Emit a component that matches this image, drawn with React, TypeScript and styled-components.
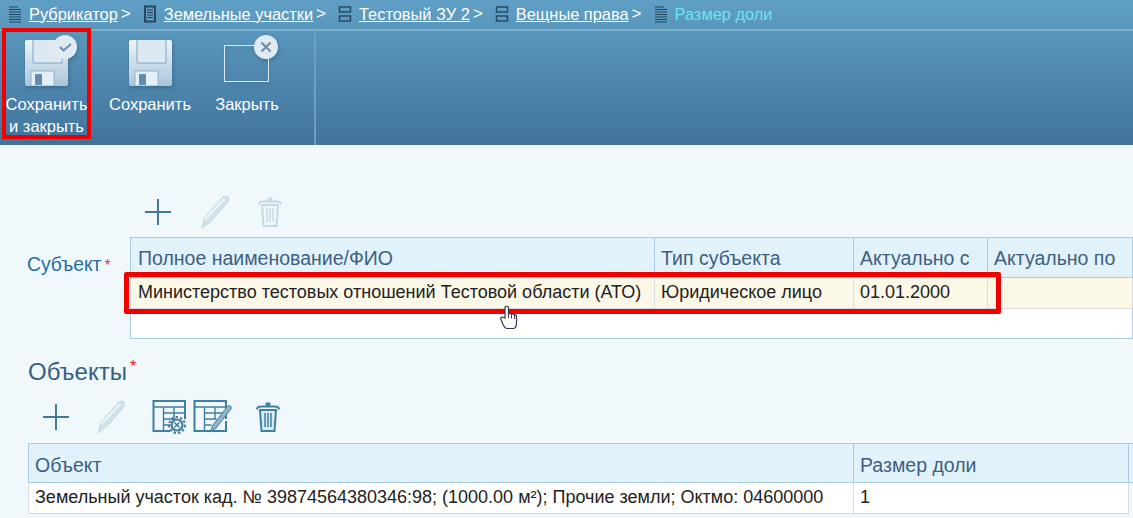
import React from 'react'
import styled, { createGlobalStyle } from 'styled-components'

const crumbs = [
  { label: 'Рубрикатор', icon: 'list' },
  { label: 'Земельные участки', icon: 'doc' },
  { label: 'Тестовый ЗУ 2', icon: 'split' },
  { label: 'Вещные права', icon: 'split' },
]

const CrumbIcon: React.FC<{ kind: string }> = ({ kind }) => {
  if (kind === 'doc') {
    return (
      <svg width="14" height="18" viewBox="0 0 14 18">
        <rect x="2" y="1.500" width="10" height="15" fill="none" stroke="#26465f" strokeWidth="2" />
        <path d="M4 5h6M4 7.500h6M4 10h6M4 12.500h6" stroke="#26465f" strokeWidth="1" />
      </svg>
    )
  }
  if (kind === 'split') {
    return (
      <svg width="14" height="18" viewBox="0 0 14 18">
        <rect x="1.500" y="2" width="11" height="5" fill="none" stroke="#26465f" strokeWidth="1.400" />
        <rect x="1.500" y="11" width="11" height="5" fill="none" stroke="#26465f" strokeWidth="1.400" />
      </svg>
    )
  }
  return (
    <svg width="14" height="18" viewBox="0 0 14 18">
      <path d="M1 2h9M1 4.500h12M1 7h12M1 9.500h12M1 12h12M1 14.500h12M1 17h12" stroke="#26465f" strokeWidth="1.200" />
    </svg>
  )
}

const SaveIcon: React.FC = () => (
  <svg width="43" height="46" viewBox="0 0 43 46">
    <defs>
      <linearGradient id="disk" x1="0" y1="0" x2="0" y2="1">
        <stop offset="0" stopColor="#eef5fa" />
        <stop offset="1" stopColor="#a9c6da" />
      </linearGradient>
    </defs>
    <path d="M0 2q0-2 2-2h39q2 0 2 2v42q0 2-2 2H2q-2 0-2-2z" fill="url(#disk)" />
    <path d="M8 0v23h29V0" fill="#dce9f2" stroke="#7fa6c2" strokeWidth="1" />
    <rect x="6" y="31" width="23" height="15" fill="#e6eff5" stroke="#8fb1c9" strokeWidth="1" />
    <rect x="10" y="34" width="7" height="11" fill="#5f8fb0" />
  </svg>
)

const Badge: React.FC<{ kind: 'check' | 'close' }> = ({ kind }) => (
  <BadgeCircle>
    <svg width="24" height="24" viewBox="0 0 24 24" fill="none" stroke="#6a8aa5" strokeWidth="2">
      {kind === 'check' ? <path d="M7 12l3.500 3.500L18 9" /> : <path d="M7.500 7.500l9 9M16.500 7.500l-9 9" />}
    </svg>
  </BadgeCircle>
)

const PlusIcon: React.FC = () => (
  <svg width="28" height="28" viewBox="0 0 28 28">
    <path d="M14 1v26M1 14h26" stroke="#3f7a9c" strokeWidth="2" />
  </svg>
)

const PenIcon: React.FC = () => (
  <svg width="30" height="34" viewBox="0 0 30 34">
    <path d="M2 33l3-11L22 3c2-2 5-2 6-1 1 2 0 4-1 6L11 26z" fill="#d3e3ec" stroke="#bed4e0" strokeWidth="1" />
    <path d="M5 24L24 4" stroke="#eef6fa" strokeWidth="2" />
  </svg>
)

const TrashIcon: React.FC<{ muted?: boolean }> = ({ muted }) => {
  const c = muted ? '#c4d9e5' : '#3f7f9f'
  return (
    <svg width="24" height="32" viewBox="0 0 24 32" fill="none" stroke={c}>
      <path d="M1 8.500c0-2 2-3 4-3h14c2 0 4 1 4 3" strokeWidth="2" />
      <path d="M10 4.500h4V2h-4z" fill={c} strokeWidth="1" />
      <path d="M4 9l1.500 21h13L20 9z" fill={muted ? 'none' : '#d9ebf5'} strokeWidth="2" />
      <path d="M9 12v14M12 12v14M15 12v14" strokeWidth="1.500" />
    </svg>
  )
}

const GridIcon: React.FC<{ mode: 'gear' | 'pen' }> = ({ mode }) => (
  <svg width="39" height="36" viewBox="0 0 39 36" fill="none" stroke="#3f7f9f">
    <path d="M33 20V2H1.500v30H18" strokeWidth="2" />
    <path d="M1 8h32M11.500 8v24M11.500 14h21M11.500 20h12M11.500 26h7M22 8v12" strokeWidth="1.400" />
    {mode === 'gear' ? (
      <g>
        <circle cx="25" cy="26" r="5.500" fill="#f1f8fc" strokeWidth="2.200" />
        <circle cx="25" cy="26" r="8" strokeWidth="2" strokeDasharray="2.500 2" />
        <path d="M22.500 23.500l5 5M27.500 23.500l-5 5" strokeWidth="1.500" />
      </g>
    ) : (
      <g>
        <path d="M33 22v10H18" strokeWidth="2" />
        <path d="M17 33l3-7L34 8c2-3 5-1 4 2L23 29z" fill="#8fb6ce" strokeWidth="1" />
      </g>
    )}
  </svg>
)

const HandCursor: React.FC = () => (
  <svg width="19" height="25" viewBox="0 0 19 25">
    <path
      d="M5 13V2.500C5 .8 8.500 .8 8.500 2.500V9c1-.6 2.500-.4 3 .3 1-.5 2.500-.2 3 .7 .8-.3 2 .2 2 1v6c0 3-1 6-2.500 6.500H7c-2 0-3-2-4-4L.8 14c-.6-1.500 1-2.500 2.200-1.500z"
      fill="#fff"
      stroke="#333a50"
      strokeWidth="1.200"
    />
    <path d="M8.500 9v4M11.500 9.500v4M14.500 10v4" stroke="#333a50" strokeWidth="1" />
  </svg>
)

const App: React.FC = () => {
  return (
    <Page>
      <GlobalStyle />
      <Header>
        <Breadcrumbs>
          {crumbs.map((item) => (
            <Crumb key={item.label}>
              <CrumbIcon kind={item.icon} />
              <CrumbLink>{item.label}</CrumbLink>
              <Arrow>&gt;</Arrow>
            </Crumb>
          ))}
          <Crumb>
            <CrumbIcon kind="list" />
            <CurrentCrumb>Размер доли</CurrentCrumb>
          </Crumb>
        </Breadcrumbs>
        <Toolbar>
          <ToolGroup>
            <ToolButton $marked $width={89}>
              <ToolIcon>
                <SaveIcon />
                <Badge kind="check" />
              </ToolIcon>
              <span>Сохранить<br />и закрыть</span>
            </ToolButton>
            <ToolButton $width={118}>
              <ToolIcon>
                <SaveIcon />
              </ToolIcon>
              <span>Сохранить</span>
            </ToolButton>
            <ToolButton $width={76}>
              <ToolIcon>
                <CloseFrame />
                <Badge kind="close" />
              </ToolIcon>
              <span>Закрыть</span>
            </ToolButton>
          </ToolGroup>
        </Toolbar>
      </Header>

      <Content>
        <SubjectSection>
          <IconRow $left={144} $gap={28}>
            <PlusIcon />
            <PenIcon />
            <TrashIcon muted />
          </IconRow>
          <SubjectRow>
            <SubjectLabel>
              Субъект<Star>*</Star>
            </SubjectLabel>
            <TableWrap>
              <Table>
                <colgroup>
                  <col width="524" />
                  <col width="199" />
                  <col width="134" />
                  <col />
                </colgroup>
                <thead>
                  <tr>
                    <HeadCell>Полное наименование/ФИО</HeadCell>
                    <HeadCell>Тип субъекта</HeadCell>
                    <HeadCell>Актуально с</HeadCell>
                    <HeadCell>Актуально по</HeadCell>
                  </tr>
                </thead>
                <tbody>
                  <tr>
                    <Cell $selected>Министерство тестовых отношений Тестовой области (АТО)</Cell>
                    <Cell $selected>Юридическое лицо</Cell>
                    <Cell $selected>01.01.2000</Cell>
                    <Cell $selected />
                  </tr>
                  <tr>
                    <EmptyCell colSpan={4} />
                  </tr>
                </tbody>
              </Table>
              <RowMark />
              <Cursor>
                <HandCursor />
              </Cursor>
            </TableWrap>
          </SubjectRow>
        </SubjectSection>

        <section>
          <SectionTitle>
            Объекты<TitleStar>*</TitleStar>
          </SectionTitle>
          <IconRow $left={42} $gap={26}>
            <PlusIcon />
            <PenIcon />
            <GridPair>
              <GridIcon mode="gear" />
              <GridIcon mode="pen" />
            </GridPair>
            <TrashIcon />
          </IconRow>
          <ObjectsTable>
            <colgroup>
              <col width="825" />
              <col width="275" />
              <col />
            </colgroup>
            <thead>
              <tr>
                <HeadCell>Объект</HeadCell>
                <HeadCell>Размер доли</HeadCell>
                <TailHead />
              </tr>
            </thead>
            <tbody>
              <tr>
                <Cell>Земельный участок кад. № 39874564380346:98; (1000.00 м²); Прочие земли; Октмо: 04600000</Cell>
                <Cell>1</Cell>
                <TailCell />
              </tr>
            </tbody>
          </ObjectsTable>
        </section>
      </Content>
    </Page>
  )
}

const GlobalStyle = createGlobalStyle`
  html, body {
    margin: 0;
    padding: 0;
    overflow: hidden;
  }
  body {
    font-family: "Liberation Sans", Arial, sans-serif;
    background-color: #f1f8fc;
  }
`

const Page = styled.div`
  width: 1133px;
  height: 518px;
  overflow: hidden;
  background-color: #f1f8fc;
`

const Header = styled.div`
  height: 145px;
  background: linear-gradient(#609fc5, #41749b);
  color: #fff;
`

const Breadcrumbs = styled.div`
  height: 31px;
  display: flex;
  align-items: center;
  padding: 0 0 1px 8px;
  box-sizing: border-box;
  font-size: 16.400px;
  border-bottom: 2px solid #7aaecd;
`

const Crumb = styled.div`
  display: flex;
  align-items: center;
  gap: 7px;
  margin-right: 12px;
  white-space: nowrap;
`

const CrumbLink = styled.span`
  color: #fff;
  text-decoration: underline;
`

const Arrow = styled.span`
  font-size: 17px;
  margin-left: -4px;
`

const CurrentCrumb = styled.span`
  color: #6fe3f3;
`

const Toolbar = styled.div`
  display: flex;
  height: 114px;
`

const ToolGroup = styled.div`
  display: flex;
  width: 316px;
  padding-left: 2px;
  box-sizing: border-box;
  border-right: 2px solid #6d9fc0;
`

const ToolButton = styled.div<{ $marked?: boolean; $width: number }>`
  width: ${(p) => p.$width}px;
  height: 111px;
  margin-top: -3px;
  display: flex;
  flex-direction: column;
  align-items: center;
  text-align: center;
  font-size: 16.500px;
  line-height: 22px;
  white-space: nowrap;
  box-sizing: border-box;
  padding-top: 12px;
  outline: ${(p) => (p.$marked ? '4px solid #f20000' : 'none')};
  outline-offset: -4px;
`

const ToolIcon = styled.div`
  position: relative;
  width: 43px;
  height: 46px;
  margin-bottom: 7px;
  filter: drop-shadow(1px 2px 2px rgba(30, 60, 90, 0.35));
  svg {
    display: block;
  }
`

const BadgeCircle = styled.div`
  position: absolute;
  top: -5px;
  right: -9px;
  width: 24px;
  height: 24px;
  border-radius: 50%;
  background-color: #dfeaf2;
`

const CloseFrame = styled.div`
  width: 45px;
  height: 37px;
  margin: 5px 0 0 -2px;
  border: 1.500px solid #dbe8f1;
  box-sizing: border-box;
`

const Content = styled.div`
  padding-top: 46px;
`

const SubjectSection = styled.div`
  padding-bottom: 10px;
`

const IconRow = styled.div<{ $left: number; $gap: number }>`
  display: flex;
  align-items: center;
  gap: ${(p) => p.$gap}px;
  height: 42px;
  padding-left: ${(p) => p.$left}px;
`

const SubjectRow = styled.div`
  display: flex;
  margin-top: 4px;
`

const SubjectLabel = styled.div`
  width: 130px;
  padding: 17px 0 0 27px;
  box-sizing: border-box;
  font-size: 19.300px;
  color: #246ea5;
`

const Star = styled.span`
  color: #ef3b4f;
  font-size: 16px;
  margin-left: 3px;
`

const TableWrap = styled.div`
  position: relative;
  flex: 1;
  height: 101px;
  th:first-child,
  td:first-child {
    padding-left: 7px;
  }
`

const Table = styled.table`
  width: 1003px;
  border-collapse: collapse;
  table-layout: fixed;
  background-color: #fff;
  border: 1px solid #a8cde2;
`

const ObjectsTable = styled(Table)`
  width: 1120px;
  margin: 5px 0 0 28px;
  border-bottom: none;
  th {
    height: 39px;
    padding-top: 4px;
  }
`

const HeadCell = styled.th`
  height: 40px;
  padding: 2px 6px 0;
  box-sizing: border-box;
  background-color: #e1f2fb;
  border-right: 1px solid #a8cde2;
  border-bottom: 1px solid #a8cde2;
  font-size: 19.500px;
  font-weight: normal;
  text-align: left;
  color: #3e5f80;
  white-space: nowrap;
`

const TailHead = styled(HeadCell)`
  border-right: none;
`

const Cell = styled.td<{ $selected?: boolean }>`
  height: 31px;
  padding: 0 6px 2px;
  box-sizing: border-box;
  background-color: ${(p) => (p.$selected ? '#fcf8e8' : '#fff')};
  border-left: 1px solid #dcdcdc;
  border-right: 1px solid #dcdcdc;
  border-bottom: 1px solid #dcdcdc;
  font-size: 18px;
  color: #222;
  white-space: nowrap;
`

const TailCell = styled.td`
  background-color: #f1f8fc;
`

const EmptyCell = styled.td`
  height: 27px;
`

const RowMark = styled.div`
  position: absolute;
  left: -6px;
  top: 35px;
  width: 877px;
  height: 42px;
  border: 5px solid #f20000;
  border-radius: 2px;
  box-sizing: border-box;
`

const Cursor = styled.div`
  position: absolute;
  left: 370px;
  top: 68px;
`

const SectionTitle = styled.div`
  padding-left: 28px;
  height: 48px;
  font-size: 24px;
  line-height: 38px;
  color: #365f85;
`

const TitleStar = styled.span`
  color: #f01010;
  font-size: 16px;
  vertical-align: 8px;
  margin-left: 3px;
`

const GridPair = styled.div`
  display: flex;
  gap: 2px;
  margin-right: -2px;
`

export default App
